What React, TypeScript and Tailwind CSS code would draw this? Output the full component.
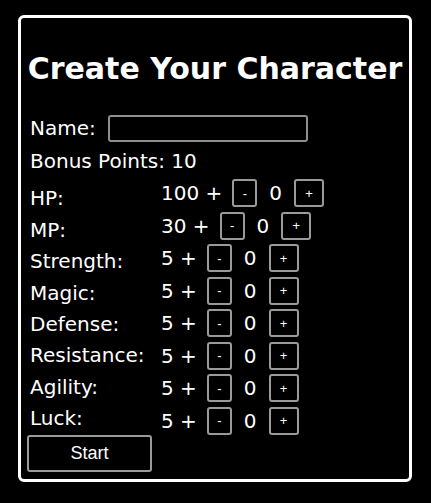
import { useState } from "react";

type Stat = {
  label: string;
  base: number;
};

const stats: Stat[] = [
  { label: "HP:", base: 100 },
  { label: "MP:", base: 30 },
  { label: "Strength:", base: 5 },
  { label: "Magic:", base: 5 },
  { label: "Defense:", base: 5 },
  { label: "Resistance:", base: 5 },
  { label: "Agility:", base: 5 },
  { label: "Luck:", base: 5 },
];

function StepButton({ sign, onClick }: { sign: "-" | "+"; onClick: () => void }) {
  return (
    <button
      type="button"
      onClick={onClick}
      className={`flex h-[28px] items-center justify-center rounded-[3px] border-2 border-[#9a9a9a] bg-black font-['Liberation_Sans',Arial,sans-serif] text-[13px] leading-none text-white ${
        sign === "-" ? "w-[25px]" : "w-[30px]"
      }`}
    >
      {sign}
    </button>
  );
}

export default function App() {
  const [name, setName] = useState("");
  const [bonus, setBonus] = useState<number[]>(stats.map(() => 0));
  const left = 10 - bonus.reduce((sum, value) => sum + value, 0);

  function change(index: number, delta: number) {
    const next = bonus[index] + delta;
    if (next < 0 || (delta > 0 && left <= 0)) {
      return;
    }
    setBonus(bonus.map((value, i) => (i === index ? next : value)));
  }

  return (
    <div className="min-h-[503px] bg-black pt-[15px] font-['DejaVu_Sans',Verdana,sans-serif] text-white">
      <div className="ml-[18px] w-[394px] rounded-[6px] border-[3px] border-white pb-[7px] pl-[7px] pt-[36px]">
        <h1 className="-ml-[7px] text-center text-[30px] font-bold leading-[30px]">Create Your Character</h1>

        <div className="mt-[31px] flex h-[27px] items-start">
          <span className="mt-[3px] w-[80px] pl-[2px] text-[20px] leading-[20px]">Name:</span>
          <input
            value={name}
            onChange={(event) => setName(event.target.value)}
            className="h-[27px] w-[200px] rounded-[3px] border-2 border-[#8e8e8e] bg-black px-1 text-[16px] text-white outline-none"
          />
        </div>

        <p className="mt-[9px] pl-[2px] text-[20px] leading-[20px]">Bonus Points: {left}</p>

        <div className="mt-[8px] flex items-start">
          <div className="flex w-[133px] flex-col gap-[11.4px] pl-[2px] pt-[9.4px]">
            {stats.map((stat) => (
              <span key={stat.label} className="text-[20px] leading-[20px]">
                {stat.label}
              </span>
            ))}
          </div>
          <div className="flex flex-col gap-[4.5px]">
            {stats.map((stat, index) => (
              <div key={stat.label} className="flex h-[28px] items-center text-[20px] leading-[20px]">
                <span className="mr-[10px]">{stat.base} +</span>
                <StepButton sign="-" onClick={() => change(index, -1)} />
                <span className="mx-[12px]">{bonus[index]}</span>
                <StepButton sign="+" onClick={() => change(index, 1)} />
              </div>
            ))}
          </div>
        </div>

        <button
          type="button"
          className="-ml-[1px] h-[37px] w-[125px] rounded-[3px] border-2 border-[#9a9a9a] bg-black font-['Liberation_Sans',Arial,sans-serif] text-[18px] text-white"
        >
          Start
        </button>
      </div>
    </div>
  );
}
